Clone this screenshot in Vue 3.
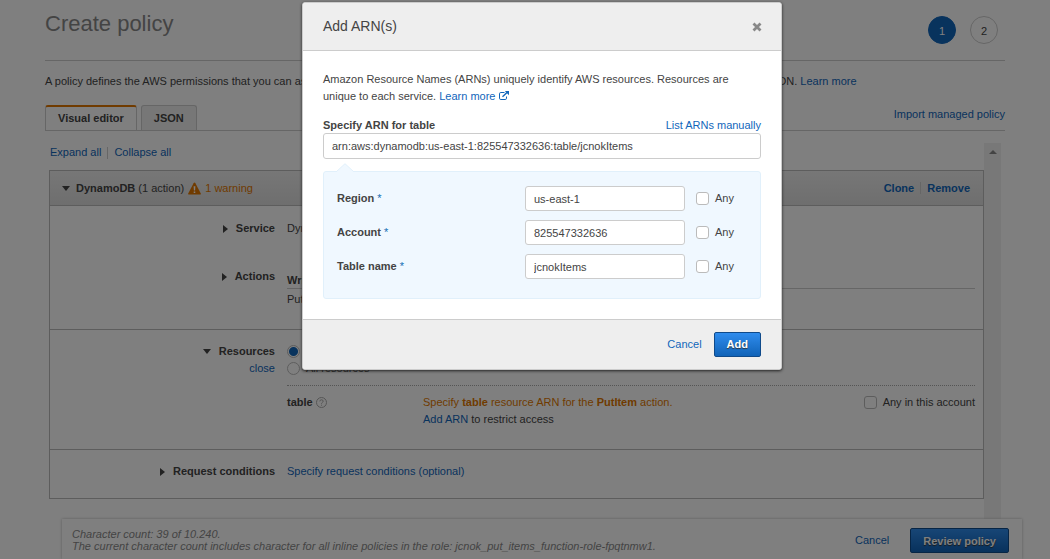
<script setup>
import { ref } from 'vue'

const arn = ref('arn:aws:dynamodb:us-east-1:825547332636:table/jcnokItems')
const fields = ref([
  { id: 'region', label: 'Region', value: 'us-east-1', any: false },
  { id: 'account', label: 'Account', value: '825547332636', any: false },
  { id: 'table-name', label: 'Table name', value: 'jcnokItems', any: false },
])
const scope = ref('specific')
const anyInAccount = ref(false)
</script>

<template>
  <div class="screen">
    <main class="page">
      <header class="page-head">
        <h1>Create policy</h1>
        <ol class="steps">
          <li class="step current">1</li>
          <li class="step">2</li>
        </ol>
      </header>

      <p class="intro">
        <span class="intro-text">A policy defines the AWS permissions that you can assign to a user, group, or role. You can create and edit a policy in the visual editor and by using JSON.</span>
        <a href="#">Learn more</a>
      </p>

      <div class="tab-bar">
        <div class="tabs">
          <button type="button" class="tab active">Visual editor</button>
          <button type="button" class="tab">JSON</button>
        </div>
        <a href="#" class="import">Import managed policy</a>
      </div>

      <div class="editor">
        <div class="editor-main">
          <nav class="expand">
            <a href="#">Expand all</a><i class="sep"></i><a href="#">Collapse all</a>
          </nav>

          <section class="panel">
            <div class="panel-head">
              <svg class="caret" width="8" height="5" viewBox="0 0 8 5"><path d="M0 0h8L4 5z" fill="#444" /></svg>
              <span><b>DynamoDB</b> (1 action)</span>
              <svg class="warn" width="13" height="13" viewBox="0 0 13 13">
                <path d="M6.5.5Q7 .5 7.4 1.2L12.8 11.4Q13 12.6 12 12.6H1Q0 12.6.2 11.4L5.6 1.2Q6 .5 6.5.5z" fill="#e07700" />
                <path d="M5.6 4.2h1.8L7.1 8.6H5.9zM5.7 9.6h1.6v1.5H5.7z" fill="#fff" />
              </svg>
              <span class="orange">1 warning</span>
              <div class="panel-actions">
                <a href="#">Clone</a><i class="sep"></i><a href="#">Remove</a>
              </div>
            </div>

            <div class="block block-top">
              <div class="row">
                <div class="name">
                  <svg width="5" height="8" viewBox="0 0 5 8"><path d="M0 0v8L5 4z" fill="#444" /></svg>
                  <b>Service</b>
                </div>
                <div class="value">DynamoDB</div>
              </div>
              <div class="row row-actions">
                <div class="name">
                  <svg width="5" height="8" viewBox="0 0 5 8"><path d="M0 0v8L5 4z" fill="#444" /></svg>
                  <b>Actions</b>
                </div>
                <div class="value">
                  <div class="group">Write</div>
                  <div class="action">PutItem</div>
                </div>
              </div>
            </div>

            <div class="block block-resources">
              <div class="row">
                <div class="name-stack">
                  <div class="name">
                    <svg width="8" height="5" viewBox="0 0 8 5"><path d="M0 0h8L4 5z" fill="#444" /></svg>
                    <b>Resources</b>
                  </div>
                  <a href="#">close</a>
                </div>
                <div class="value">
                  <label class="choice"><input v-model="scope" type="radio" name="scope" value="specific" class="radio" />Specific</label>
                  <label class="choice"><input v-model="scope" type="radio" name="scope" value="all" class="radio" />All resources</label>
                  <div class="resource">
                    <div class="resource-name">
                      <b>table</b>
                      <svg width="11" height="11" viewBox="0 0 11 11" fill="none" stroke="#aaa">
                        <circle cx="5.5" cy="5.5" r="5" />
                        <path d="M3.8 4.4Q3.9 2.8 5.5 2.8T7.2 4.2Q7.2 5 6.2 5.5 5.5 5.9 5.5 6.7M5.5 7.7v1" />
                      </svg>
                    </div>
                    <div class="resource-info">
                      <div class="orange">Specify <b>table</b> resource ARN for the <b>PutItem</b> action.</div>
                      <div><a href="#">Add ARN</a> to restrict access</div>
                    </div>
                    <label class="check-label"><input v-model="anyInAccount" type="checkbox" class="check" />Any in this account</label>
                  </div>
                </div>
              </div>
            </div>

            <div class="block block-conditions">
              <div class="row">
                <div class="name">
                  <svg width="5" height="8" viewBox="0 0 5 8"><path d="M0 0v8L5 4z" fill="#444" /></svg>
                  <b>Request conditions</b>
                </div>
                <div class="value"><a href="#">Specify request conditions (optional)</a></div>
              </div>
            </div>
          </section>
        </div>
        <div class="scrollbar">
          <svg width="8" height="4" viewBox="0 0 8 4"><path d="M0 4h8L4 0z" fill="#888" /></svg>
        </div>
      </div>
    </main>

    <footer class="page-foot">
      <p>Character count: 39 of 10.240.<br />The current character count includes character for all inline policies in the role: jcnok_put_items_function-role-fpqtnmw1.</p>
      <a href="#" class="cancel">Cancel</a>
      <button type="button" class="primary">Review policy</button>
    </footer>

    <div class="overlay">
      <div class="modal" role="dialog" aria-modal="true" aria-labelledby="dialog-title">
        <header class="modal-head">
          <h2 id="dialog-title">Add ARN(s)</h2>
          <button type="button" class="close" aria-label="Close">
            <svg width="10" height="10" viewBox="0 0 10 10"><path d="M1.5 1.5l7 7M8.5 1.5l-7 7" stroke="#888" stroke-width="2.8" /></svg>
          </button>
        </header>

        <div class="modal-body">
          <p>
            Amazon Resource Names (ARNs) uniquely identify AWS resources. Resources are unique to each service.
            <a href="#">Learn more
              <svg class="external" width="10" height="9" viewBox="0 0 10 9" fill="none" stroke="#1166bb">
                <path d="M5.5 1.5H1.8Q.5 1.5.5 2.8v4.4Q.5 8.5 1.8 8.5h4.4Q7.5 8.5 7.5 7.2V5.5" />
                <path d="M3.5 5.7L8 1.6" stroke-width="1.4" />
                <path d="M5.8 0H10v4.2z" fill="#1166bb" stroke="none" />
              </svg>
            </a>
          </p>
          <div class="arn-head">
            <label for="arn">Specify ARN for table</label>
            <a href="#">List ARNs manually</a>
          </div>
          <input id="arn" v-model="arn" type="text" class="text arn" />
          <svg class="notch" width="18" height="9" viewBox="0 0 18 9">
            <path d="M0 9L9 .7 18 9" fill="#f0f8ff" stroke="#e1f0fb" />
          </svg>
          <div class="parts">
            <div v-for="field in fields" :key="field.id" class="part">
              <label :for="field.id" class="part-label">{{ field.label }} <span class="star">*</span></label>
              <input :id="field.id" v-model="field.value" type="text" class="text" />
              <label class="check-label"><input v-model="field.any" type="checkbox" class="check" />Any</label>
            </div>
          </div>
        </div>

        <footer class="modal-foot">
          <a href="#">Cancel</a>
          <button type="button" class="primary">Add</button>
        </footer>
      </div>
    </div>
  </div>
</template>

<style>
body {
  margin: 0;
  background: #fff;
}
</style>

<style scoped>
.screen {
  position: relative;
  display: flex;
  flex-direction: column;
  height: 100vh;
  overflow: hidden;
  font: 11px/17px "Liberation Sans", Arial, sans-serif;
  color: #444;
}
.screen *,
.screen *::before {
  box-sizing: border-box;
}
button,
input {
  font: inherit;
  color: inherit;
  margin: 0;
}
svg {
  flex: none;
}
a {
  color: #1166bb;
  text-decoration: none;
}
p,
h1,
h2 {
  margin: 0;
  font-weight: normal;
}
.orange {
  color: #e07700;
}
.page {
  flex: 1;
  min-height: 0;
  display: flex;
  flex-direction: column;
  padding: 0 45px;
}
.page-head {
  flex: none;
  display: flex;
  justify-content: space-between;
  height: 61px;
  border-bottom: 1px solid #ccc;
}
h1 {
  padding-top: 10px;
  font-size: 22px;
  line-height: 28px;
  color: #888;
}
.steps {
  display: flex;
  gap: 14px;
  margin: 0;
  padding: 16px 7px 0 0;
  list-style: none;
}
.step {
  width: 28px;
  height: 28px;
  border: 1px solid #ccc;
  border-radius: 50%;
  text-align: center;
  line-height: 28px;
}
.current {
  background: #1166bb;
  border-color: #1166bb;
  color: #fff;
}
.intro {
  display: flex;
  gap: 3px;
  padding-top: 12px;
  white-space: nowrap;
}
.tab-bar {
  flex: none;
  display: flex;
  justify-content: space-between;
  margin-top: 15px;
  border-bottom: 1px solid #ccc;
}
.tabs {
  display: flex;
  gap: 4px;
}
.tab {
  height: 25px;
  padding: 0 12px;
  border: 1px solid #ccc;
  border-bottom: 0;
  border-radius: 3px 3px 0 0;
  background: #eee;
  font-weight: bold;
}
.active {
  border-top: 2px solid #e07700;
  background: #fff;
}
.import {
  padding-top: 1px;
}
.editor {
  flex: 1;
  min-height: 0;
  display: flex;
  padding: 12px 4px 0;
}
.editor-main {
  flex: 1;
}
.expand {
  display: flex;
  align-items: center;
  padding: 1px 0 9px 1px;
}
.sep {
  width: 1px;
  height: 12px;
  margin: 0 6px;
  background: #ccc;
}
.panel {
  border: 1px solid #bbb;
}
.panel-head {
  display: flex;
  align-items: center;
  gap: 4px;
  height: 35px;
  padding: 0 13px 0 12px;
  border-bottom: 1px solid #bbb;
  background: linear-gradient(#eee, #ddd);
}
.caret {
  margin-right: 2px;
}
.panel-actions {
  display: flex;
  align-items: center;
  margin-left: auto;
  font-weight: bold;
}
.block + .block {
  border-top: 1px solid #bbb;
}
.block-top {
  height: 123px;
  padding-top: 14px;
}
.block-resources {
  height: 120px;
  padding-top: 13px;
}
.block-conditions {
  height: 49px;
  padding-top: 13px;
}
.row {
  display: grid;
  grid-template-columns: 225px 1fr;
  column-gap: 12px;
  padding-right: 8px;
}
.row-actions {
  margin-top: 31px;
}
.name {
  display: flex;
  align-items: center;
  justify-content: flex-end;
  gap: 8px;
  height: 17px;
}
.name-stack {
  text-align: right;
}
.group {
  padding-top: 3px;
  border-bottom: 1px solid #ccc;
  line-height: 16px;
  font-weight: bold;
  margin-top: 1px;
}
.action {
  padding-top: 2px;
}
.choice,
.check-label {
  display: flex;
  align-items: center;
}
.radio,
.check {
  appearance: none;
  flex: none;
  width: 13px;
  height: 13px;
  margin-right: 6px;
  border: 1px solid #bbb;
  background: #fff;
}
.radio {
  border-radius: 50%;
}
.radio:checked {
  background: radial-gradient(circle, #1166bb 4px, #fff 5px);
}
.check {
  border-radius: 3px;
}
.resource {
  display: flex;
  align-items: flex-start;
  margin-top: 8px;
  padding-top: 8px;
  border-top: 1px dotted #aaa;
}
.resource-name {
  display: flex;
  align-items: center;
  gap: 3px;
  flex: 0 0 136px;
}
.resource-info {
  flex: 1;
}
.scrollbar {
  flex: none;
  width: 17px;
  background: #f1f1f1;
  text-align: center;
  line-height: 15px;
}
.page-foot {
  position: relative;
  flex: none;
  display: flex;
  align-items: flex-start;
  height: 40px;
  margin: 0 28px 0 62px;
  padding: 9px 13px 0 10px;
  background: #fff;
  box-shadow: 0 0 3px #bbb;
  line-height: 12px;
  color: #888;
}
.page-foot p {
  flex: 1;
  font-style: italic;
}
.cancel {
  margin: 6px 21px 0 0;
}
.primary {
  height: 25px;
  padding: 0 12px;
  border: 1px solid #0f4a8a;
  border-radius: 2px;
  background: linear-gradient(#2f8ced, #1063b8);
  color: #fff;
  font-weight: bold;
  text-shadow: 0 1px 1px #333;
}
.overlay {
  position: absolute;
  inset: 0;
  display: flex;
  justify-content: center;
  align-items: flex-start;
  padding: 2px 0 0 34px;
  background: rgba(0, 0, 0, 0.5);
}
.modal {
  width: 480px;
  border: 1px solid #ccc;
  border-radius: 3px;
  overflow: hidden;
  background: #fff;
  box-shadow: 0 1px 3px #222;
}
.modal-head {
  display: flex;
  align-items: center;
  justify-content: space-between;
  height: 48px;
  padding: 0 19px 0 20px;
  border-bottom: 1px solid #ccc;
  background: #eee;
}
h2 {
  font-size: 14px;
}
.close {
  display: flex;
  padding: 0;
  border: 0;
  background: none;
}
.modal-body {
  padding: 20px;
}
.arn-head {
  display: flex;
  justify-content: space-between;
  margin-top: 12px;
  line-height: 16px;
}
.arn-head label,
.part-label {
  font-weight: bold;
}
.text {
  display: block;
  width: 100%;
  height: 25px;
  padding: 0 8px;
  border: 1px solid #ccc;
  border-radius: 3px;
  background: #fff;
}
.arn {
  height: 26px;
}
.notch {
  display: block;
  position: relative;
  margin: 4px 0 -1px 13px;
}
.parts {
  display: grid;
  gap: 9px;
  padding: 14px 13px 19px;
  border: 1px solid #e1f0fb;
  border-radius: 3px;
  background: #f0f8ff;
}
.part {
  display: grid;
  grid-template-columns: 1fr 160px 62px;
  align-items: center;
}
.part .check-label {
  padding-left: 11px;
}
.star {
  font-weight: normal;
  color: #146eb4;
}
.modal-foot {
  display: flex;
  align-items: center;
  justify-content: flex-end;
  gap: 12px;
  height: 50px;
  padding: 0 20px;
  border-top: 1px solid #ccc;
  background: #eee;
}
</style>
